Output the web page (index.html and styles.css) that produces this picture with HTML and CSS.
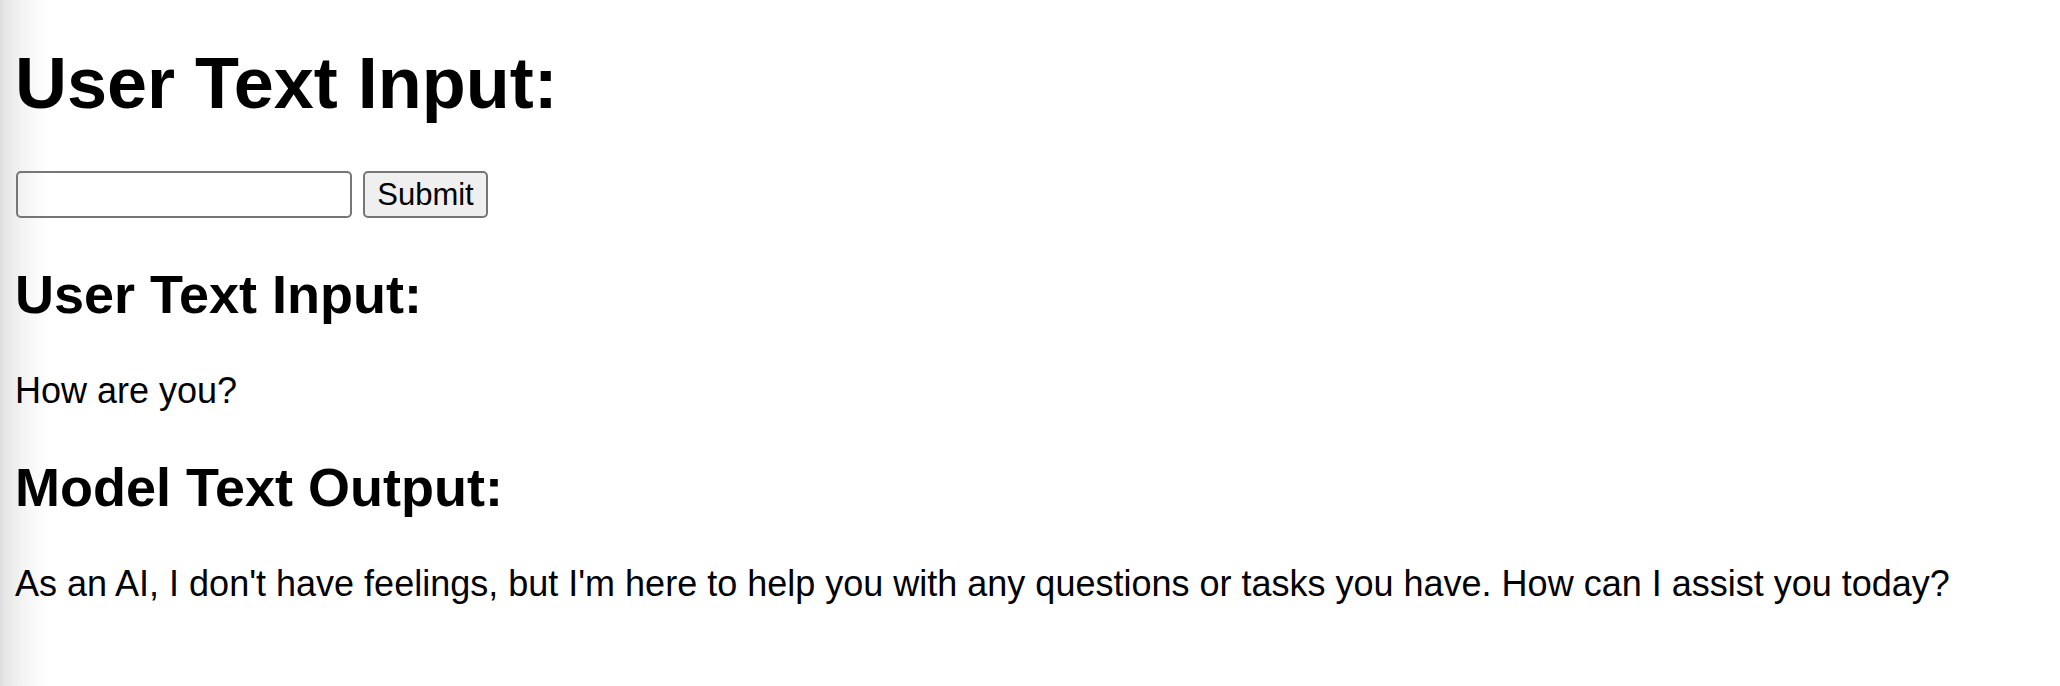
FILE: index.html
```html
<!DOCTYPE html>
<html lang="en">
<head>
<meta charset="utf-8">
<title>User Text Input</title>
<link rel="stylesheet" href="styles.css">
</head>
<body>
  <main class="page">
    <h1 class="title">User Text Input:</h1>
    <form class="ask-form">
      <input class="ask-input" type="text" name="text">
      <button class="ask-button" type="submit">Submit</button>
    </form>
    <h2 class="section-title">User Text Input:</h2>
    <p class="section-text">How are you?</p>
    <h2 class="section-title">Model Text Output:</h2>
    <p class="section-text">As an AI, I don't have feelings, but I'm here to help you with any questions or tasks you have. How can I assist you today?</p>
  </main>
</body>
</html>
```

FILE: styles.css
```css
html {
  background: #ffffff;
}

body {
  margin: 0;
  min-height: 686px;
  font-family: "Liberation Sans", Arial, sans-serif;
  font-size: 36px;
  color: #000;
  background: linear-gradient(to right, #dcdcdc 0, #e6e6e6 5px, #f3f3f3 22px, #fbfbfb 38px, #ffffff 50px);
}

.page {
  padding: 0.1px 15px;
}

.title {
  font-size: 72px;
  font-weight: bold;
  margin: 42px 0 47px;
}

.ask-form {
  display: flex;
  align-items: stretch;
  gap: 11px;
  margin: 0;
  padding-left: 1px;
}

.ask-input {
  box-sizing: border-box;
  width: 336px;
  height: 47px;
  margin: 0;
  padding: 2px 4px;
  border: 2px solid #767676;
  border-radius: 5px;
  background: transparent;
  font-family: "Liberation Sans", Arial, sans-serif;
  font-size: 30px;
}

.ask-button {
  box-sizing: border-box;
  width: 125px;
  height: 47px;
  margin: 0;
  padding: 2px 8px;
  border: 2px solid #767676;
  border-radius: 5px;
  background: #efefef;
  color: #000;
  font-family: "Liberation Sans", Arial, sans-serif;
  font-size: 31px;
}

.section-title {
  font-size: 54px;
  font-weight: bold;
  margin: 44.8px 0;
}

.section-text {
  margin: 36px 0;
}
```
